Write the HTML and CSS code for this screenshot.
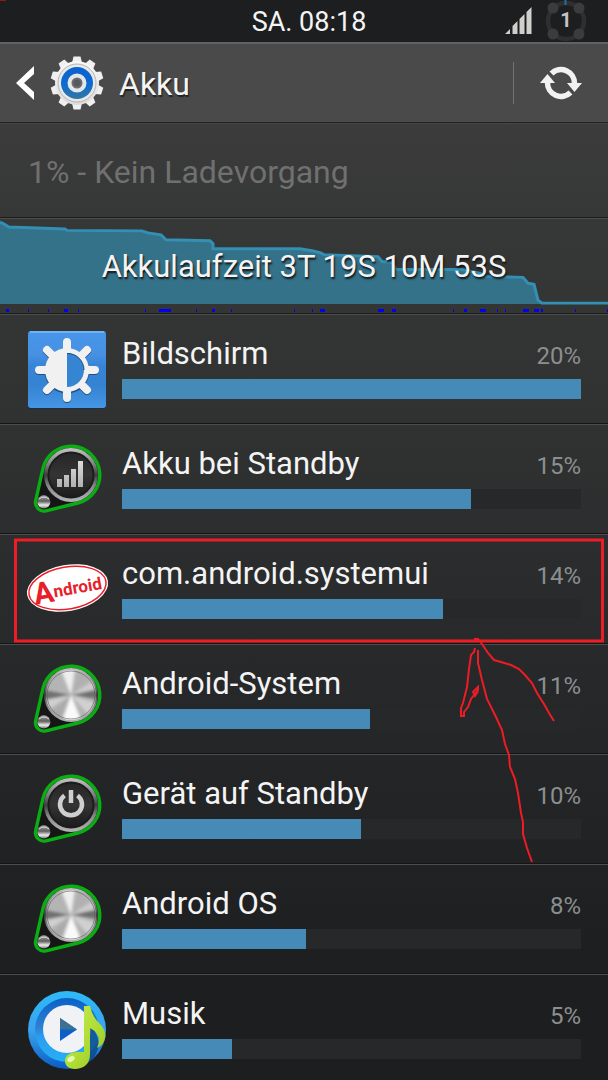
FILE: index.html
```html
<!DOCTYPE html>
<html lang="de">
<head>
<meta charset="utf-8">
<meta name="viewport" content="width=device-width, initial-scale=1">
<title>Akku</title>
<link rel="stylesheet" href="styles.css">
</head>
<body>
<svg class="defs" width="0" height="0" aria-hidden="true">
  <defs>
    <linearGradient id="rim" x1="0" y1="0" x2="0" y2="1">
      <stop offset="0" stop-color="#c4c4c4"/><stop offset=".3" stop-color="#808182"/><stop offset=".5" stop-color="#3c3d3e"/><stop offset=".7" stop-color="#85878a"/><stop offset="1" stop-color="#b4b5b6"/>
    </linearGradient>
    <linearGradient id="face" x1="0" y1="0" x2="0" y2="1">
      <stop offset="0" stop-color="#262626"/><stop offset=".5" stop-color="#343434"/><stop offset="1" stop-color="#1b1b1b"/>
    </linearGradient>
    <linearGradient id="glyph" x1="0" y1="0" x2="0" y2="1">
      <stop offset="0" stop-color="#dcdcdc"/><stop offset="1" stop-color="#b0b0b0"/>
    </linearGradient>
    <linearGradient id="ball" x1="0" y1="0" x2="0" y2="1">
      <stop offset="0" stop-color="#a8a8a8"/><stop offset=".45" stop-color="#5e5e5e"/><stop offset=".75" stop-color="#eee"/><stop offset="1" stop-color="#777"/>
    </linearGradient>
    <linearGradient id="gear" x1="0" y1="0" x2="0" y2="1">
      <stop offset="0" stop-color="#fafafa"/><stop offset="1" stop-color="#dcdcdc"/>
    </linearGradient>
    <linearGradient id="gearRing" x1="0" y1="0" x2="0" y2="1">
      <stop offset="0" stop-color="#0b62cc"/><stop offset=".55" stop-color="#0c6bd2"/><stop offset="1" stop-color="#3478a0"/>
    </linearGradient>
    <linearGradient id="tile" x1="0" y1="0" x2="0" y2="1">
      <stop offset="0" stop-color="#4795ea"/><stop offset=".3" stop-color="#4791e2"/><stop offset=".45" stop-color="#3585d8"/><stop offset=".7" stop-color="#3583d2"/><stop offset="1" stop-color="#4696e6"/>
    </linearGradient>
    <linearGradient id="disc" x1="0" y1="0" x2="0" y2="1">
      <stop offset="0" stop-color="#2fbaf8"/><stop offset=".5" stop-color="#38a3ee"/><stop offset="1" stop-color="#0a5cc4"/>
    </linearGradient>
    <linearGradient id="discRing" x1="0" y1="0" x2="0" y2="1">
      <stop offset="0" stop-color="#0b60c6"/><stop offset=".45" stop-color="#2d7fd3"/><stop offset=".6" stop-color="#2a9cf0"/><stop offset="1" stop-color="#27b0f4"/>
    </linearGradient>
    <linearGradient id="note" x1="0" y1="0" x2="1" y2="1">
      <stop offset="0" stop-color="#c6ee55"/><stop offset=".6" stop-color="#aedb32"/><stop offset="1" stop-color="#8fc31c"/>
    </linearGradient>
    <clipPath id="steelClip"><circle cx="43" cy="34" r="25"/></clipPath>
    <clipPath id="discClip"><circle cx="39" cy="39" r="39"/></clipPath>
    <filter id="soft" x="-20%" y="-20%" width="140%" height="140%"><feGaussianBlur stdDeviation="1.6"/></filter>
    <g id="pod">
      <path d="M7.7 59.6 14.9 27.7A28.8 28.8 0 1 1 49.9 62L18 69.8A8.5 8.5 0 0 1 7.7 59.6Z" fill="#161616" stroke="#0aae12" stroke-width="3.400"/>
      <circle cx="15.8" cy="60.8" r="6.6" fill="url(#ball)"/>
      <path d="M11 58q5-4 10 0" fill="none" stroke="#ddd" stroke-width="1"/>
    </g>
    <g id="dial">
      <use href="#pod"/>
      <circle cx="43" cy="34" r="27" fill="url(#rim)"/>
      <circle cx="43" cy="34" r="22.5" fill="url(#face)" stroke="#1c1c1c" stroke-width="2"/>
    </g>
    <g id="steel">
      <use href="#pod"/>
      <circle cx="43" cy="34" r="27" fill="url(#rim)"/>
      <g clip-path="url(#steelClip)">
        <circle cx="43" cy="34" r="26" fill="#b4b4b4"/>
        <g filter="url(#soft)">
          <path d="M43 34 30 2H48Z" fill="#eee"/>
          <path d="M43 34 54 4 70 10Z" fill="#b0b0b0"/>
          <path d="M43 34 74 14 76 26Z" fill="#ccc"/>
          <path d="M43 34 76 27V39Z" fill="#6e6e6e"/>
          <path d="M43 34 74 44 66 60Z" fill="#d0d0d0"/>
          <path d="M43 34 56 66H32Z" fill="#fafafa"/>
          <path d="M43 34 28 66 16 58Z" fill="#aaa"/>
          <path d="M43 34 12 54 10 40Z" fill="#d0d0d0"/>
          <path d="M43 34 10 40V28Z" fill="#707070"/>
          <path d="M43 34 12 24 24 6Z" fill="#b4b4b4"/>
        </g>
      </g>
      <circle cx="43" cy="34" r="24" fill="none" stroke="#555" stroke-opacity=".6"/>
    </g>
  </defs>
</svg>

<div class="screen">
  <div class="status">
    <span class="corner-mark"></span>
    <time class="clock">SA. 08:18</time>
    <div class="tray">
      <svg width="28" height="42" viewBox="0 0 28 42" role="img" aria-label="Signal">
        <path d="M0 34 5 29V34ZM7.500 34V26L12.500 21V34ZM14.500 34V19L19.500 14V34ZM21.500 34V12L26.500 7V34Z" fill="#cfcfcc"/>
      </svg>
      <svg width="42" height="42" viewBox="0 0 42 42" role="img" aria-label="Akku 1 Prozent">
        <circle cx="21" cy="21" r="18" fill="none" stroke="#2e2f31" stroke-width="4.500"/>
        <g fill="#3b3c3d"><circle cx="8" cy="8" r="5.500"/><circle cx="34" cy="8" r="5.500"/><circle cx="8" cy="34" r="5.500"/><circle cx="34" cy="34" r="5.500"/></g>
        <path d="M20.500 0V5" stroke="#216f92" stroke-width="2"/>
        <text class="level" x="21" y="27" text-anchor="middle">1</text>
      </svg>
    </div>
  </div>

  <header class="bar">
    <button class="up" type="button">
      <svg width="19" height="34" viewBox="0 0 19 34" aria-hidden="true"><path d="M18 0V8L8 17 18 26V34L0 17Z" fill="#fff"/></svg>
      <svg width="54" height="54" viewBox="-27 -27 54 54" aria-hidden="true">
        <g fill="url(#gear)">
          <path id="tooth" d="M-5-20-3.500-26.500H3.500L5-20Z" fill="#f0f0f0"/>
          <use href="#tooth" transform="rotate(36)"/><use href="#tooth" transform="rotate(72)"/><use href="#tooth" transform="rotate(108)"/><use href="#tooth" transform="rotate(144)"/><use href="#tooth" transform="rotate(180)"/><use href="#tooth" transform="rotate(216)"/><use href="#tooth" transform="rotate(252)"/><use href="#tooth" transform="rotate(288)"/><use href="#tooth" transform="rotate(324)"/>
          <circle r="22"/>
        </g>
        <circle r="19" fill="#e9e9e9" stroke="#b5b5b5"/>
        <circle r="16" fill="url(#gearRing)"/>
        <circle r="7.500" fill="#6b6d70" stroke="#e4e6e8" stroke-width="4"/>
        <circle r="3.500" fill="#55585c"/>
      </svg>
      <span class="title">Akku</span>
    </button>
    <button class="refresh" type="button" aria-label="Aktualisieren">
      <svg width="42" height="42" viewBox="0 0 42 42" aria-hidden="true">
        <g id="sweep"><path d="M11.500 11.500A13.500 13.500 0 0 1 34.500 21.500" fill="none" stroke="#f2f2f2" stroke-width="5.500"/><path d="M27 21H42L34.500 30Z" fill="#f2f2f2"/></g>
        <use href="#sweep" transform="rotate(180 21 21)"/>
      </svg>
    </button>
  </header>

  <main>
    <p class="state">1% - Kein Ladevorgang</p>

    <section class="history">
      <svg class="graph" viewBox="0 0 608 96" preserveAspectRatio="none" aria-hidden="true">
        <path d="M0 3 4 5 9 8 65 10 67 11.500 142 12 148 14 161 16 166 21 210 22 213 25V30L300 30 312 32 320 34 324 36 378 38 382 43 392 44 396 51H462L480 55 485 58 523 59 528 65 534 66 538 82 542 85V86H0Z" fill="#34728a"/>
        <path d="M0 3 4 5 9 8 65 10 67 11.500 142 12 148 14 161 16 166 21 210 22 213 25V30L300 30 312 32 320 34 324 36 378 38 382 43 392 44 396 51H462L480 55 485 58 523 59 528 65 534 66 538 82 542 85H608" fill="none" stroke="#338fb3" stroke-width="3"/>
        <path d="M6 92.500h3m19 0h1m19 0h1m15 0h4m10 0h1m66 0h1m13 0h12m25 0h1m15 0h3m16 0h1m62 0h1m17 0h1m7 0h5m53 0h6m8 0h4m57 0h1m10 0h3m13 0h6m11 0h1m7 0h1m17 0h6m5 0h5m2 0h2m32 0h1m31 0h1" stroke="#0000f4" stroke-width="3" fill="none"/>
      </svg>
      <p class="runtime">Akkulaufzeit 3T 19S 10M 53S</p>
    </section>

    <ul class="usage">
      <li class="row">
        <svg class="icon" viewBox="0 0 78 78" aria-hidden="true">
          <rect y="1" width="78" height="77" rx="3" fill="#1c2f45"/><rect width="78" height="77" rx="3" fill="url(#tile)"/><path d="M2 1H76" stroke="#6db6f6" stroke-width="2"/>
          <path d="M39 12V68M11 40H67M19 20 59 60M59 20 19 60" stroke="#20507f" stroke-width="8" stroke-linecap="round"/>
          <circle cx="39" cy="40" r="22.500" fill="#20507f"/>
          <path d="M39 11V67M11 39H67M19 19 59 59M59 19 19 59" stroke="#f1f1f1" stroke-width="8" stroke-linecap="round"/>
          <circle cx="39" cy="39" r="22" fill="#f1f1f1"/>
          <path d="M39 22A17 17 0 0 1 39 56Z" fill="#3585d3"/><path d="M39 22.500A16.500 16.500 0 0 1 56 39" fill="none" stroke="#20507f"/>
        </svg>
        <div class="info"><div class="line"><span class="name">Bildschirm</span><span class="share">20%</span></div><div class="track"><div class="fill" style="width:100%"></div></div></div>
      </li>
      <li class="row">
        <svg class="icon" viewBox="0 0 78 78" aria-hidden="true"><use href="#dial"/><path d="M29 38h5v8h-5ZM36 34h5v12h-5ZM43 28h5v18h-5ZM50 20h5v26h-5Z" fill="url(#glyph)"/></svg>
        <div class="info"><div class="line"><span class="name">Akku bei Standby</span><span class="share">15%</span></div><div class="track"><div class="fill" style="width:76%"></div></div></div>
      </li>
      <li class="row">
        <svg class="icon" viewBox="0 0 78 78" overflow="visible" aria-hidden="true">
          <g transform="rotate(-10 39.500 37)">
            <ellipse cx="39.500" cy="37" rx="41" ry="23" fill="#fff"/>
            <ellipse cx="39.500" cy="37" rx="39" ry="21" fill="none" stroke="#e8202a" stroke-width="1.500"/>
            <text class="logo" x="5" y="48"><tspan class="logo-cap">A</tspan><tspan dy="-4">ndroid</tspan></text>
          </g>
        </svg>
        <div class="info"><div class="line"><span class="name">com.android.systemui</span><span class="share">14%</span></div><div class="track"><div class="fill" style="width:70%"></div></div></div>
      </li>
      <li class="row">
        <svg class="icon" viewBox="0 0 78 78" aria-hidden="true"><use href="#steel"/></svg>
        <div class="info"><div class="line"><span class="name">Android-System</span><span class="share">11%</span></div><div class="track"><div class="fill" style="width:54%"></div></div></div>
      </li>
      <li class="row">
        <svg class="icon" viewBox="0 0 78 78" aria-hidden="true"><use href="#dial"/><path d="M36.500 24.500A11 11 0 1 0 49.500 24.500M43 19V32" fill="none" stroke="#cfcfcf" stroke-width="4.500"/></svg>
        <div class="info"><div class="line"><span class="name">Gerät auf Standby</span><span class="share">10%</span></div><div class="track"><div class="fill" style="width:52%"></div></div></div>
      </li>
      <li class="row">
        <svg class="icon" viewBox="0 0 78 78" aria-hidden="true"><use href="#steel"/></svg>
        <div class="info"><div class="line"><span class="name">Android OS</span><span class="share">8%</span></div><div class="track"><div class="fill" style="width:40%"></div></div></div>
      </li>
      <li class="row">
        <svg class="icon" viewBox="0 0 78 78" aria-hidden="true">
          <circle cx="39" cy="39" r="39" fill="url(#disc)"/>
          <circle cx="39" cy="39" r="32" fill="url(#discRing)"/>
          <circle cx="39" cy="38" r="24" fill="#f1f2f6"/>
          <path d="M32 27V50L49 38.500Z" fill="#0a5fca"/><path d="M32 27V38.500H49Z" fill="#3c7192"/>
          <g clip-path="url(#discClip)"><path d="M62 34Q73 46 70 58L64 72 54 76 62 60Z" fill="#0b3f78" opacity=".7"/></g>
          <path d="M56 15H62Q64 25 71 32 79 40 77 47 76 54 69 57 75 44 62 37V64C62 73 55 78 47 78 40 78 37 74 37 70 37 64 43 61 50 61H56Z" fill="url(#note)"/>
          <ellipse cx="43" cy="68" rx="4" ry="2.500" fill="#e4f8b0" transform="rotate(-30 43 68)"/>
        </svg>
        <div class="info"><div class="line"><span class="name">Musik</span><span class="share">5%</span></div><div class="track"><div class="fill" style="width:24%"></div></div></div>
      </li>
    </ul>
  </main>

  <svg class="markup" width="608" height="1080" viewBox="0 0 608 1080" aria-hidden="true">
    <g fill="none" stroke="#ee1c24">
      <rect x="15.500" y="540" width="587" height="101" stroke-width="3"/>
      <path stroke-width="2" d="M474 639 478 639 482 644 488 653 494 660 501 662 511 665 519 669 525 675 532 683 537 693 544 704 549 713 554 721M475 648 474 652 471 655 469 669 467 687 463 703 461 708V716H464V712L468 707 471 699 474 695 478 690 478 687 473 692 475 696 478 691M478 650 478 663 482 680 487 699 496 717 502 730 505 744 509 755 510 767 515 779 518 793 521 813 523 822 523 834 527 848 532 862"/>
    </g>
  </svg>
</div>
</body>
</html>
```
FILE: styles.css
```css
* { box-sizing: border-box; }

body {
  margin: 0;
  background: #1d1e20;
  color: #f4f4f4;
  font-family: Roboto, "Liberation Sans", sans-serif;
  font-size: 31px;
  line-height: 40px;
}

p, ul { margin: 0; padding: 0; }

button {
  margin: 0;
  padding: 0;
  border: 0;
  background: none;
  color: inherit;
  font: inherit;
}

.defs { position: absolute; }

.screen {
  position: relative;
  height: 100vh;
  overflow: hidden;
  background: linear-gradient(#3c3c3c 120px, #363737 220px, #313232 400px, #292a2b 620px, #222325 830px, #1d1e20 980px);
}

.status {
  position: relative;
  display: grid;
  grid-template-columns: 1fr auto 1fr;
  align-items: center;
  height: 42px;
  padding: 0 21px;
  background: #1d1e20;
}

.corner-mark {
  position: absolute;
  top: 0;
  left: 0;
  width: 6px;
  height: 1px;
  background: #8a1a1c;
}

.clock {
  grid-column: 2;
  padding: 2px 0 0 10px;
  font-size: 27px;
}

.tray {
  grid-column: 3;
  display: flex;
  justify-content: flex-end;
  gap: 12px;
}

.level {
  fill: #c4c4c4;
  font-size: 20px;
  font-weight: 700;
}

.bar {
  display: flex;
  align-items: center;
  justify-content: space-between;
  height: 81px;
  padding-left: 16px;
  border-top: 2px solid #626262;
  border-bottom: 1px solid #232323;
  background: #4a4a4a;
}

.up {
  display: flex;
  align-items: center;
  gap: 15px;
}

.title {
  padding-top: 2px;
  font-size: 32px;
  text-shadow: 1px 2px 1px #222;
}

.refresh {
  display: flex;
  padding: 0 26px;
  border-left: 1px solid #6c7476;
}

.state {
  height: 95px;
  padding: 28px 28px 0;
  border-top: 1px solid #454545;
  border-bottom: 1px solid #1c1c1c;
  color: #707070;
  font-size: 32px;
}

.history {
  display: grid;
  height: 96px;
  border-top: 1px solid #4c4d4d;
  border-bottom: 1px solid #1c1c1c;
}

.graph {
  grid-area: 1 / 1;
  width: 100%;
  height: 95px;
}

.runtime {
  grid-area: 1 / 1;
  padding-top: 28px;
  text-align: center;
  text-shadow: 1px 2px 2px #111;
}

.usage { list-style: none; }

.row {
  display: flex;
  gap: 16px;
  height: 110px;
  padding: 16px 27px 0 28px;
  border-top: 1px solid #4b4c4c;
  border-bottom: 1px solid #151515;
}

.icon {
  flex: none;
  width: 78px;
  height: 78px;
}

.info { flex: 1; }

.line {
  display: flex;
  justify-content: space-between;
  height: 48px;
  padding-top: 3px;
}

.share {
  padding-top: 2px;
  color: #8b8f90;
  font-size: 24px;
}

.track {
  height: 20px;
  background: #272829;
}

.fill {
  height: 20px;
  background: #468ab8;
}

.logo {
  fill: #e8202a;
  font-size: 17px;
  font-weight: 700;
}

.logo-cap { font-size: 30px; }

.markup {
  position: absolute;
  top: 0;
  left: 0;
  pointer-events: none;
}
```
